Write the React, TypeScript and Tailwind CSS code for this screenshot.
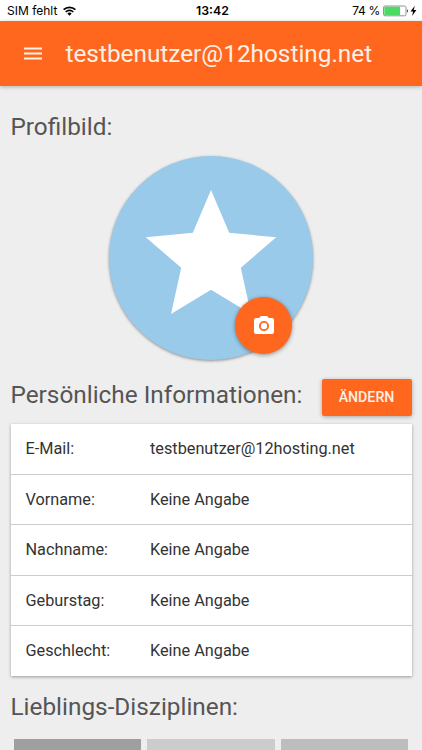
import React from "react";

const fields: [string, string][] = [
  ["E-Mail:", "testbenutzer@12hosting.net"],
  ["Vorname:", "Keine Angabe"],
  ["Nachname:", "Keine Angabe"],
  ["Geburstag:", "Keine Angabe"],
  ["Geschlecht:", "Keine Angabe"],
];

function StatusBar() {
  return (
    <div className="grid h-[21px] shrink-0 grid-cols-3 items-center bg-white font-['Inter',sans-serif] text-[12px] leading-[21px] text-black">
      <div className="flex items-center gap-[6px] pl-[7px]">
        <span className="whitespace-nowrap">SIM fehlt</span>
        <svg width="13" height="10" viewBox="0 0 13 10" fill="none" stroke="#000" strokeWidth="1.7">
          <path d="M0.6 3.7a8.4 8.4 0 0 1 11.8 0M2.7 6a5.4 5.4 0 0 1 7.6 0" />
          <path d="M4.3 7.5a3.1 3.1 0 0 1 4.4 0L6.5 9.8z" fill="#000" stroke="none" />
        </svg>
      </div>
      <span className="pl-[3px] text-center text-[12.3px] font-semibold">13:42</span>
      <div className="flex items-center justify-end pr-[5px]">
        <span className="whitespace-nowrap pr-[3px] tracking-[-0.3px]">74 %</span>
        <svg width="34" height="12" viewBox="0 0 34 12">
          <rect x="0.5" y="1" width="22.5" height="9.8" rx="1.5" fill="#fff" stroke="#777" strokeWidth="0.8" />
          <path d="M1.3 1.7h15.8v8.4H1.3z" fill="#4cd964" />
          <path d="M24 4.3q2 1.6 0 3.4z" fill="#333" />
          <path d="M31.8 0.8 27.5 6.5h2.6l-1 4.5 4.3-6h-2.7z" fill="#000" />
        </svg>
      </div>
    </div>
  );
}

function Header() {
  return (
    <header className="z-10 flex h-[65px] shrink-0 items-center bg-[#ff671f] pl-[24px] text-[#fff0e6] shadow-[0_1px_4px_rgba(0,0,0,0.25)]">
      <svg width="18" height="13" viewBox="0 0 18 13" fill="currentColor">
        <path d="M0 0.5h18v2H0zM0 5.5h18v2H0zM0 10.5h18v2H0z" />
      </svg>
      <h1 className="pl-[23.5px] text-[24.35px] leading-[30px]">testbenutzer@12hosting.net</h1>
    </header>
  );
}

function Avatar() {
  return (
    <div className="relative mx-auto mt-[13px] size-[204px] rounded-full bg-[#9acaea] shadow-[0_1px_3px_rgba(0,0,0,0.4)]">
      <svg width="204" height="204" viewBox="0 0 204 204">
        <path
          fill="#fff"
          d="M102 34 120.2 76.7 167.2 81.3 131.8 111.7 142 158 102 133.7 62 158 72.2 111.7 36.8 81.3 83.8 76.7z"
        />
      </svg>
      <button className="absolute left-[126px] top-[141px] flex size-[57px] items-center justify-center rounded-full bg-[#ff671f] shadow-[0_1px_4px_rgba(0,0,0,0.4)]">
        <svg width="24" height="24" viewBox="0 0 24 24" fill="#fff">
          <circle cx="12" cy="12" r="3.2" />
          <path d="M9 2 7.17 4H4c-1.1 0-2 .9-2 2v12c0 1.1.9 2 2 2h16c1.1 0 2-.9 2-2V6c0-1.1-.9-2-2-2h-3.17L15 2H9zm3 15c-2.76 0-5-2.24-5-5s2.24-5 5-5 5 2.24 5 5-2.24 5-5 5z" />
        </svg>
      </button>
    </div>
  );
}

export default function App() {
  return (
    <div className="flex h-[750px] w-[422px] flex-col overflow-hidden bg-[#eeeeee] font-['Roboto',sans-serif] text-[#333]">
      <StatusBar />
      <Header />
      <main className="flex flex-col px-[10.5px] pt-[25px]">
        <h2 className="text-[24.35px] leading-[32px] text-[#555]">Profilbild:</h2>
        <Avatar />
        <div className="mt-[19px] flex h-[37px] items-start justify-between">
          <h2 className="whitespace-nowrap text-[24.35px] leading-[32px] text-[#555]">Persönliche Informationen:</h2>
          <button className="h-[37px] w-[90px] shrink-0 rounded-[2px] bg-[#ff671f] text-[14.2px] font-medium text-[#fff0e6] shadow-[0_1px_4px_rgba(0,0,0,0.3)]">
            ÄNDERN
          </button>
        </div>
        <div className="mt-[8px] flex h-[252px] flex-col divide-y divide-[#ccc] bg-white text-[16.25px] shadow-[0_1px_3px_rgba(0,0,0,0.35)]">
          {fields.map(([label, value]) => (
            <div key={label} className="flex flex-1 items-center pl-[15px] pt-px">
              <span className="w-[124.5px]">{label}</span>
              <span>{value}</span>
            </div>
          ))}
        </div>
        <h2 className="mt-[15px] text-[24.35px] leading-[32px] text-[#555]">Lieblings-Disziplinen:</h2>
        <div className="mt-[16px] grid grid-cols-3 gap-[6px] pl-[3px] pr-[3px]">
          <div className="h-[128px] bg-[#9f9f9f]" />
          <div className="h-[128px] bg-[#cccccc]" />
          <div className="h-[128px] bg-[#bdbdbd]" />
        </div>
      </main>
    </div>
  );
}
